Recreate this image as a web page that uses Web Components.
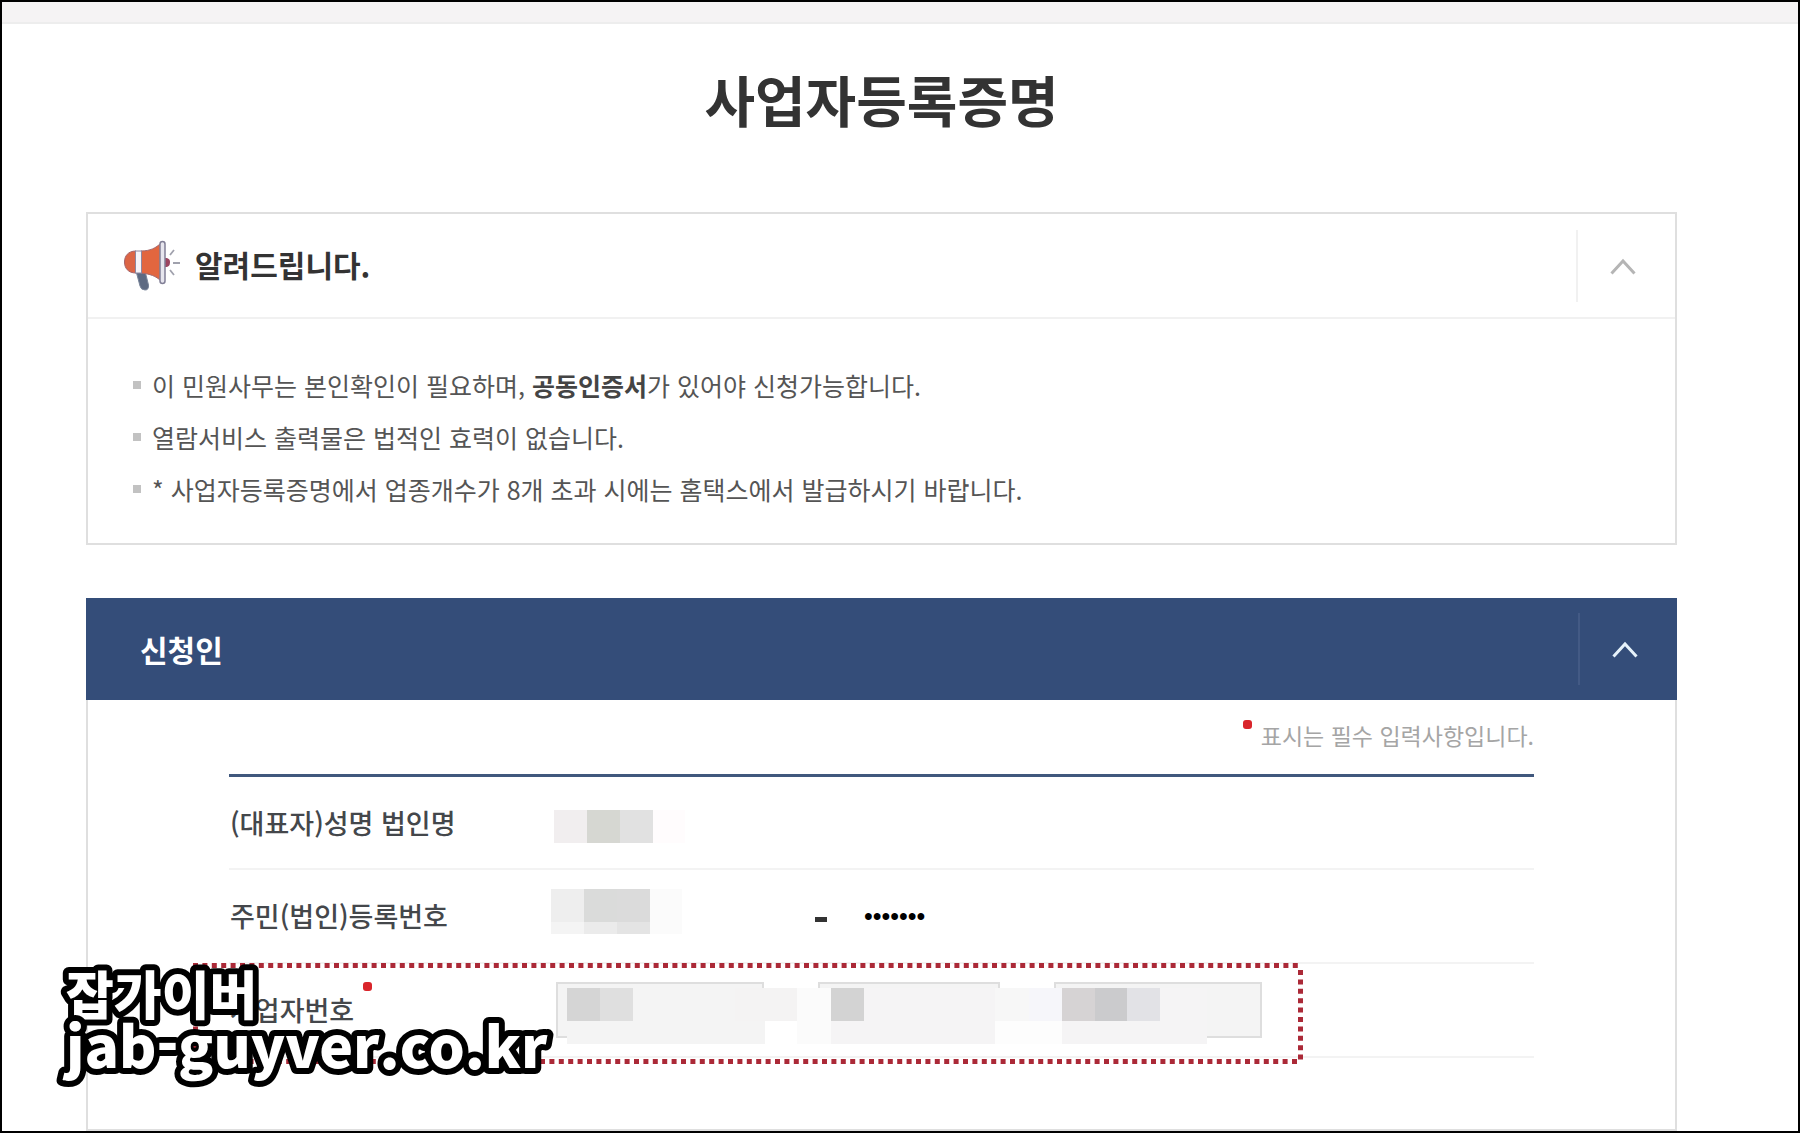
<!DOCTYPE html>
<html lang="ko">
<head>
<meta charset="utf-8">
<meta name="viewport" content="width=device-width, initial-scale=1">
<title>사업자등록증명</title>
<style>
  body { margin: 0; font-family: "Noto Sans CJK KR", "Noto Sans", sans-serif; color: #333; background: #fff; }
</style>
</head>
<body>
<cert-page></cert-page>

<script>
const define = (name, html, setup) => {
  const template = document.createElement('template');
  template.innerHTML = html;
  customElements.define(name, class extends HTMLElement {
    constructor() {
      super();
      this.attachShadow({ mode: 'open' }).append(template.content.cloneNode(true));
    }
    connectedCallback() { if (setup) setup(this, this.shadowRoot); }
  });
};

/* Loudspeaker picture beside the notice heading */
define('megaphone-icon', `
<style>:host { display: block; width: 58px; height: 52px; } svg { display: block; }</style>
<svg width="58" height="52" viewBox="0 0 58 52" aria-hidden="true">
  <path d="M13 31 L22 31 L25.500 45 Q26 50 22 50 Q18 50 17 46 Z" fill="#5d6a82" stroke="#79859a"/>
  <path d="M13 11 C5 11 1.500 16 1.500 22 C1.500 28 5 33 13 33 Z" fill="#dc6545" stroke="#a5646a"/>
  <path d="M18 11 C27 11 33 8 38 3 L38 41 C33 36 27 34 18 33 Z" fill="#e2663f" stroke="#a56b70"/>
  <rect x="12.500" y="11" width="6" height="22" fill="#f6f4f8" stroke="#8d87a0"/>
  <path d="M42 18 C46 18 47 20 47 22 C47 25 46 27 42 27 Z" fill="#9c4460"/>
  <rect x="37" y="1.500" width="5" height="42" rx="2.500" fill="#e7e6ee" stroke="#817f96" stroke-width="1.500"/>
  <path d="M47 15 L51 10 M50 23 L57 23 M47 30 L51 35" stroke="#a0a1ad" stroke-width="1.800" fill="none"/>
</svg>`);

/* Fold button with its thin divider */
define('fold-button', `
<style>
  :host { display: flex; align-self: center; }
  button { width: 99px; height: 72px; padding: 0; margin: 0; border: 0; border-left: 2px solid var(--divider, #f1f1f1);
    background: none; color: var(--chevron, #b5b5b5); display: flex; align-items: center; justify-content: start; cursor: pointer; }
  svg { display: block; margin-left: 32px; }
</style>
<button type="button" aria-label="접기" aria-expanded="true">
  <svg width="26" height="18" viewBox="0 0 26 18" fill="none" stroke="currentColor" stroke-width="3"><path d="M1.500 16.500 L13 4 L24.500 16.500"/></svg>
</button>`);

define('notice-panel', `
<style>
  :host { display: block; border: 2px solid #dfdfdf; }
  header { display: flex; align-items: center; height: 103px; padding-left: 35px; border-bottom: 2px solid #f1f1f1; }
  h2 { flex: 1; margin: 0 0 0 14px; padding-bottom: 4px; font-size: 30px; line-height: 44px; font-weight: 700; }
</style>
<header>
  <megaphone-icon></megaphone-icon>
  <h2><slot name="heading"></slot></h2>
  <fold-button></fold-button>
</header>
<slot></slot>`);

define('notice-list', `
<style>
  :host { display: block; padding: 40px 45px 28px; }
  ul { list-style: none; margin: 0; padding: 0; }
  li { display: flex; align-items: center; gap: 11px; font-size: 25px; line-height: 52px; color: #555; }
  li::before { content: ""; flex: none; width: 8px; height: 8px; background: #c2c2c2; }
  strong { color: #444; font-weight: 700; }
</style>
<ul>
  <li><span>이 민원사무는 본인확인이 필요하며, <strong>공동인증서</strong>가 있어야 신청가능합니다.</span></li>
  <li><span>열람서비스 출력물은 법적인 효력이 없습니다.</span></li>
  <li><span>* 사업자등록증명에서 업종개수가 8개 초과 시에는 홈택스에서 발급하시기 바랍니다.</span></li>
</ul>`);

define('section-panel', `
<style>
  :host { display: block; }
  header { display: flex; align-items: center; height: 102px; padding-left: 54px; background: #344d79; color: #fff; --divider: #435a85; --chevron: #e6f2fb; }
  h2 { flex: 1; margin: 0; font-size: 30px; line-height: 44px; font-weight: 700; }
  .body { border: 2px solid #dfdfdf; border-top: 0; padding: 0 141px 71px; }
</style>
<header><h2><slot name="heading"></slot></h2><fold-button></fold-button></header>
<div class="body"><slot></slot></div>`);

/* Blocks that hide personal values: "x,y,w,h,colour" separated by blanks */
define('pixel-mask', `
<style>:host { position: absolute; left: 0; top: 0; pointer-events: none; } svg { display: block; overflow: visible; }</style>
<svg width="1" height="1" shape-rendering="crispEdges" aria-hidden="true"></svg>`, (host, root) => {
  const svg = root.querySelector('svg');
  svg.innerHTML = host.getAttribute('blocks').trim().split(/\s+/).map(b => {
    const [x, y, w, h, c] = b.split(',');
    return `<rect x="${x}" y="${y}" width="${w}" height="${h}" fill="${c}"/>`;
  }).join('');
});

/* Red dotted marking around a row */
define('dotted-mark', `
<style>:host { position: absolute; left: -36px; top: -1px; width: 1110px; height: 101px; pointer-events: none; } svg { display: block; width: 100%; height: 100%; }</style>
<svg viewBox="0 0 1110 101" fill="none" stroke="#ab2937" stroke-width="5" aria-hidden="true">
  <path d="M0 2.500 H1105" stroke-dasharray="5 4.400"/>
  <path d="M1107.500 7 V98" stroke-dasharray="5 4.400"/>
  <path d="M1104 98.500 H0" stroke-dasharray="5 4.400"/>
  <path d="M2.500 7 V98" stroke-dasharray="5 4.400"/>
</svg>`);

define('form-row', `
<style>
  :host { display: flex; align-items: center; position: relative; box-sizing: border-box; min-height: 94px; border-bottom: 2px solid #f3f3f3; }
  :host(:first-child) { min-height: 93px; }
  .label { flex: none; width: 327px; padding-left: 1px; box-sizing: border-box; }
  .value { display: flex; align-items: center; }
</style>
<div class="label"><slot name="label"></slot></div>
<div class="value"><slot></slot></div>
<slot name="over"></slot>`);

define('applicant-form', `
<style>
  :host { display: block; }
  p { display: flex; justify-content: flex-end; gap: 9px; margin: 0; padding: 18px 0 22px; font-size: 23px; line-height: 34px; color: #a5a5a5; }
  .dot { flex: none; width: 9px; height: 9px; border-radius: 3px; background: #d9252b; }
  p .dot { margin-top: 2px; }
  form { margin: 0; border-top: 3px solid #40587d; }
  label { display: flex; gap: 9px; font-size: 27px; line-height: 56px; font-weight: 500; color: #44474b; }
  input { box-sizing: border-box; margin: 0; padding: 0 10px; height: 56px; width: 208px; border: 2px solid #dedede; border-radius: 0; background: #f4f4f4; font: 25px/36px "Liberation Sans", sans-serif; color: #000; outline: 0; }
  .plain { border-color: transparent; background: transparent; }
  .mid { width: 182px; }
  .group { display: flex; align-items: center; gap: 54px; }
  .id { gap: 51px; }
  .dash { flex: none; width: 12px; height: 5px; margin-top: 6px; background: #333; }
  .id .plain + .dash + .plain { padding-left: 0; margin-left: -16px; }
</style>
<p><span class="dot"></span><span>표시는 필수 입력사항입니다.</span></p>
<form>
  <form-row>
    <label slot="label" for="name">(대표자)성명 법인명</label>
    <input id="name" class="plain" readonly>
    <pixel-mask slot="over" blocks="325,33,33,33,#f1eeef 358,33,33,33,#d6d7d2 391,33,33,33,#e1e1e1 424,33,32,33,#fffcfd"></pixel-mask>
  </form-row>
  <form-row>
    <label slot="label" for="id-front">주민(법인)등록번호</label>
    <div class="group id">
      <input id="id-front" class="plain" readonly>
      <span class="dash"></span>
      <input type="password" class="plain" value="0000000" aria-label="등록번호 뒷자리" readonly>
    </div>
    <pixel-mask slot="over" blocks="322,19,33,33,#eeeeee 355,19,33,33,#dadbda 388,19,33,33,#dbdbdb 421,19,32,45,#fbfbfb 322,52,33,12,#f4f4f4 355,52,33,12,#ebebeb 388,52,33,12,#e4e4e4"></pixel-mask>
  </form-row>
  <form-row>
    <label slot="label" for="biz-1">사업자번호<span class="dot"></span></label>
    <div class="group">
      <input id="biz-1" readonly>
      <input class="mid" aria-label="사업자번호 가운데" readonly>
      <input aria-label="사업자번호 끝" readonly>
    </div>
    <pixel-mask slot="over" blocks="338,24,198,56,#f4f4f4 338,24,33,33,#d5d5d5 371,24,33,33,#dfdfdf 506,24,62,33,#f4f3f3 568,24,34,56,#fbfbfb 602,24,164,56,#f5f4f5 602,24,33,33,#d3d3d3 766,24,34,33,#f7f7f7 766,57,67,23,#fdfdfd 800,24,33,33,#f6f6fa 833,24,145,56,#f5f4f5 833,24,33,33,#d6d3d4 866,24,32,33,#cbcbcd 898,24,33,33,#e2e2e6"></pixel-mask>
    <dotted-mark slot="over"></dotted-mark>
  </form-row>
</form>`);

/* Blog signature laid over the page */
define('site-watermark', `
<style>
  :host { position: absolute; left: 42px; bottom: 21px; pointer-events: none; }
  svg { display: block; }
  text { font-family: "Noto Sans CJK KR", sans-serif; font-weight: 900; fill: #fff; stroke: #000; stroke-width: 12px; stroke-linejoin: round; paint-order: stroke fill; }
  .name { font-size: 52px; }
  .site { font-size: 57px; }
</style>
<svg width="530" height="175" viewBox="0 0 530 175">
  <text class="name" x="22" y="80">잡가이버</text>
  <text class="site" x="22" y="133">jab-guyver.co.kr</text>
</svg>`);

define('cert-page', `
<style>
  :host { display: block; position: relative; box-sizing: border-box; min-height: 100vh; border: 2px solid #000; }
  .strip { height: 20px; background: #f5f3f4; border-bottom: 2px solid #ededed; }
  main { display: flex; flex-direction: column; padding: 0 121px 0 84px; }
  h1 { margin: 0; padding: 34px 0 74px; text-align: center; font-size: 55px; line-height: 80px; font-weight: 700; }
  section-panel { margin-top: 53px; }
</style>
<div class="strip"></div>
<main>
  <h1>사업자등록증명</h1>
  <notice-panel><span slot="heading">알려드립니다.</span><notice-list></notice-list></notice-panel>
  <section-panel><span slot="heading">신청인</span><applicant-form></applicant-form></section-panel>
</main>
<site-watermark></site-watermark>`);
</script>
</body>
</html>
